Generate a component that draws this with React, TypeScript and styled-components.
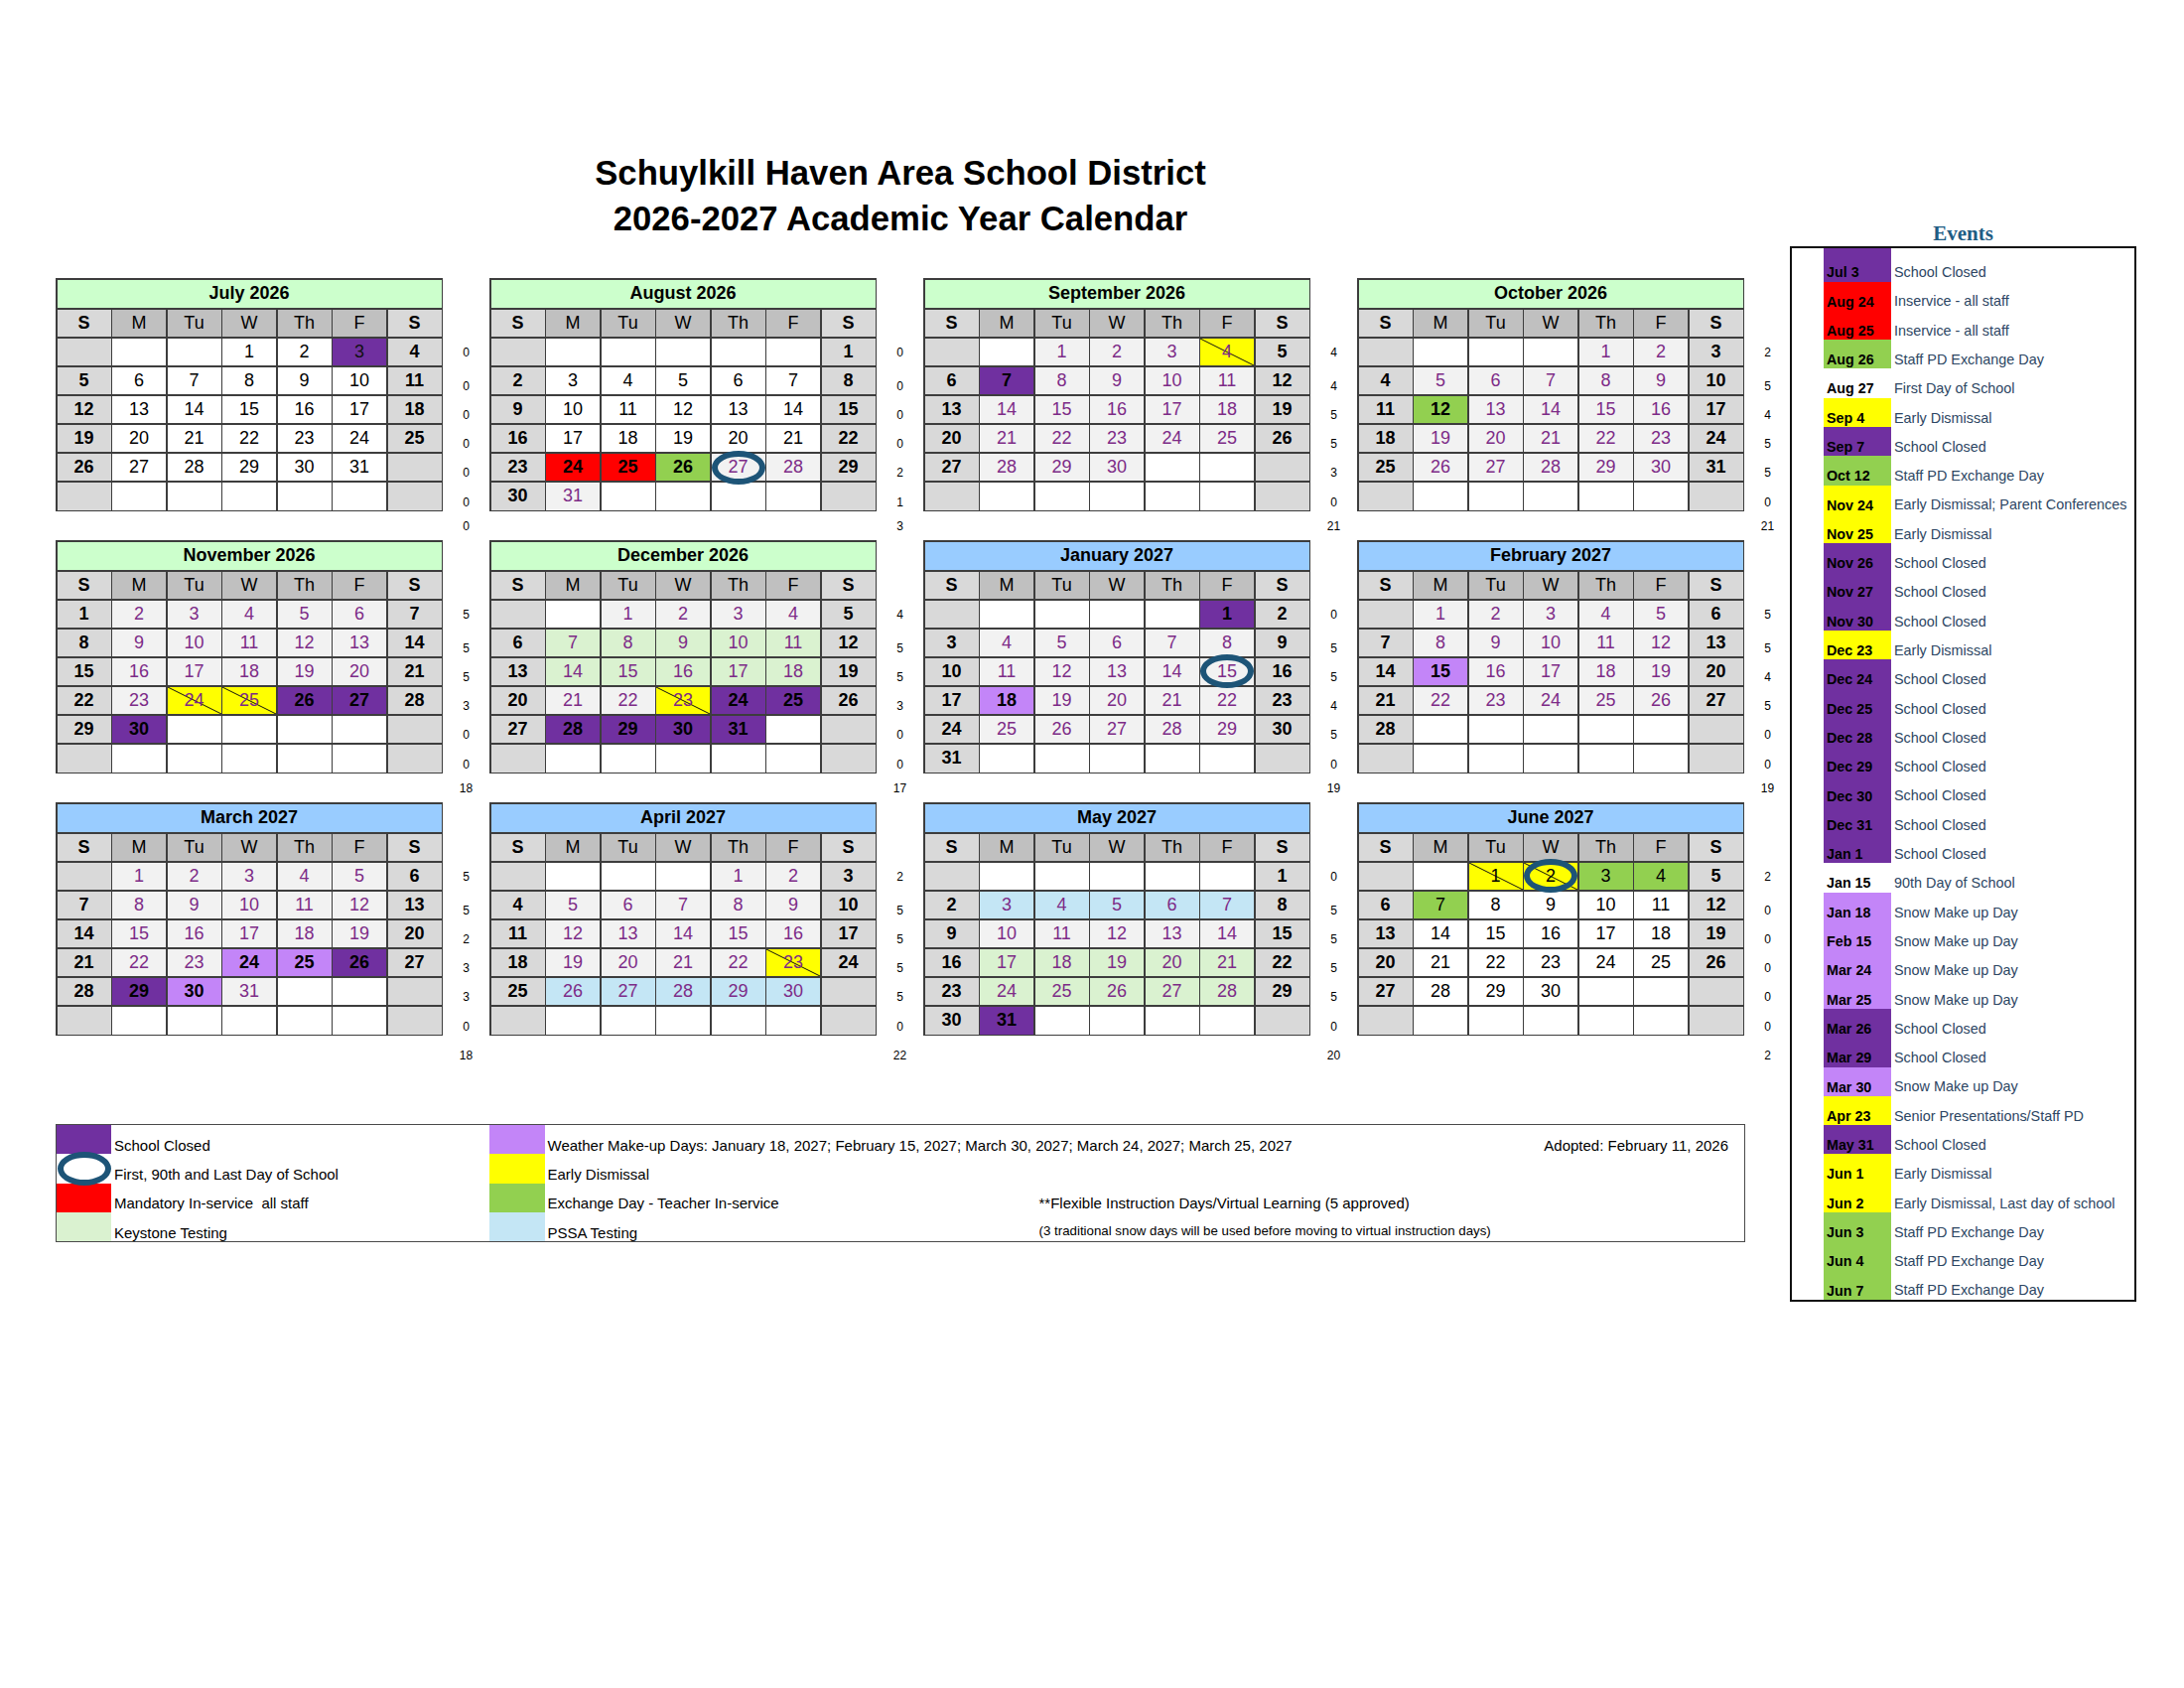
import React from 'react';
import styled, { createGlobalStyle, css } from 'styled-components';

const GlobalStyle = createGlobalStyle`
  html, body { margin: 0; padding: 0; background: #ffffff; }
  body { font-family: "Liberation Sans", Arial, Helvetica, sans-serif; color: #000; }
  * { box-sizing: border-box; }
`;

type CellKind =
  | 'off' | 'school' | 'closed' | 'closedLight' | 'red' | 'green' | 'greenB'
  | 'early' | 'earlyOff' | 'makeup' | 'keystone' | 'pssa';

const PURPLE_TEXT = '#7d2b87';

const KIND: Record<CellKind, { bg: string; color: string; bold?: boolean; diag?: boolean }> = {
  off: { bg: '#ffffff', color: '#000' },
  school: { bg: '#f2f2f2', color: PURPLE_TEXT },
  closed: { bg: '#7030a0', color: '#000', bold: true },
  closedLight: { bg: '#7030a0', color: '#111' },
  red: { bg: '#ff0000', color: '#000', bold: true },
  green: { bg: '#92d050', color: '#000' },
  greenB: { bg: '#92d050', color: '#000', bold: true },
  early: { bg: '#ffff00', color: PURPLE_TEXT, diag: true },
  earlyOff: { bg: '#ffff00', color: '#000', diag: true },
  makeup: { bg: '#c385f8', color: '#000', bold: true },
  keystone: { bg: '#daf2d0', color: PURPLE_TEXT },
  pssa: { bg: '#c4e6f5', color: PURPLE_TEXT },
};

interface MonthDef {
  name: string;
  blue?: boolean;
  start: number;
  days: number;
  def: CellKind;
  over: Record<number, CellKind>;
  ovals?: number[];
  counts: number[];
  total: number;
}

const range = (a: number, b: number, k: CellKind) => {
  const o: Record<number, CellKind> = {};
  for (let i = a; i <= b; i++) o[i] = k;
  return o;
};

const MONTHS: MonthDef[][] = [
  [
    { name: 'July 2026', start: 3, days: 31, def: 'off', over: { 3: 'closedLight' }, counts: [0, 0, 0, 0, 0, 0], total: 0 },
    { name: 'August 2026', start: 6, days: 31, def: 'off', over: { 24: 'red', 25: 'red', 26: 'greenB', 27: 'school', 28: 'school', 31: 'school' }, ovals: [27], counts: [0, 0, 0, 0, 2, 1], total: 3 },
    { name: 'September 2026', start: 2, days: 30, def: 'school', over: { 4: 'early', 7: 'closed' }, counts: [4, 4, 5, 5, 3, 0], total: 21 },
    { name: 'October 2026', start: 4, days: 31, def: 'school', over: { 12: 'greenB' }, counts: [2, 5, 4, 5, 5, 0], total: 21 },
  ],
  [
    { name: 'November 2026', start: 0, days: 30, def: 'school', over: { 24: 'early', 25: 'early', 26: 'closed', 27: 'closed', 30: 'closed' }, counts: [5, 5, 5, 3, 0, 0], total: 18 },
    { name: 'December 2026', start: 2, days: 31, def: 'school', over: { ...range(7, 11, 'keystone'), ...range(14, 18, 'keystone'), 23: 'early', 24: 'closed', 25: 'closed', 28: 'closed', 29: 'closed', 30: 'closed', 31: 'closed' }, counts: [4, 5, 5, 3, 0, 0], total: 17 },
    { name: 'January 2027', blue: true, start: 5, days: 31, def: 'school', over: { 1: 'closed', 18: 'makeup' }, ovals: [15], counts: [0, 5, 5, 4, 5, 0], total: 19 },
    { name: 'February 2027', blue: true, start: 1, days: 28, def: 'school', over: { 15: 'makeup' }, counts: [5, 5, 4, 5, 0, 0], total: 19 },
  ],
  [
    { name: 'March 2027', blue: true, start: 1, days: 31, def: 'school', over: { 24: 'makeup', 25: 'makeup', 26: 'closed', 29: 'closed', 30: 'makeup' }, counts: [5, 5, 2, 3, 3, 0], total: 18 },
    { name: 'April 2027', blue: true, start: 4, days: 30, def: 'school', over: { 23: 'early', ...range(26, 30, 'pssa') }, counts: [2, 5, 5, 5, 5, 0], total: 22 },
    { name: 'May 2027', blue: true, start: 6, days: 31, def: 'school', over: { ...range(3, 7, 'pssa'), ...range(17, 21, 'keystone'), ...range(24, 28, 'keystone'), 31: 'closed' }, counts: [0, 5, 5, 5, 5, 0], total: 20 },
    { name: 'June 2027', blue: true, start: 2, days: 30, def: 'off', over: { 1: 'earlyOff', 2: 'earlyOff', 3: 'green', 4: 'green', 7: 'green' }, ovals: [2], counts: [2, 0, 0, 0, 0, 0], total: 2 },
  ],
];

type EvKind = 'purple' | 'red' | 'green' | 'yellow' | 'none' | 'lilac';
const EV_BG: Record<EvKind, string> = {
  purple: '#7030a0',
  red: '#ff0000',
  green: '#92d050',
  yellow: '#ffff00',
  none: 'transparent',
  lilac: '#c385f8',
};

const EVENTS: [string, EvKind, string][] = [
  ['Jul 3', 'purple', 'School Closed'],
  ['Aug 24', 'red', 'Inservice - all staff'],
  ['Aug 25', 'red', 'Inservice - all staff'],
  ['Aug 26', 'green', 'Staff PD Exchange Day'],
  ['Aug 27', 'none', 'First Day of School'],
  ['Sep 4', 'yellow', 'Early Dismissal'],
  ['Sep 7', 'purple', 'School Closed'],
  ['Oct 12', 'green', 'Staff PD Exchange Day'],
  ['Nov 24', 'yellow', 'Early Dismissal; Parent Conferences'],
  ['Nov 25', 'yellow', 'Early Dismissal'],
  ['Nov 26', 'purple', 'School Closed'],
  ['Nov 27', 'purple', 'School Closed'],
  ['Nov 30', 'purple', 'School Closed'],
  ['Dec 23', 'yellow', 'Early Dismissal'],
  ['Dec 24', 'purple', 'School Closed'],
  ['Dec 25', 'purple', 'School Closed'],
  ['Dec 28', 'purple', 'School Closed'],
  ['Dec 29', 'purple', 'School Closed'],
  ['Dec 30', 'purple', 'School Closed'],
  ['Dec 31', 'purple', 'School Closed'],
  ['Jan 1', 'purple', 'School Closed'],
  ['Jan 15', 'none', '90th Day of School'],
  ['Jan 18', 'lilac', 'Snow Make up Day'],
  ['Feb 15', 'lilac', 'Snow Make up Day'],
  ['Mar 24', 'lilac', 'Snow Make up Day'],
  ['Mar 25', 'lilac', 'Snow Make up Day'],
  ['Mar 26', 'purple', 'School Closed'],
  ['Mar 29', 'purple', 'School Closed'],
  ['Mar 30', 'lilac', 'Snow Make up Day'],
  ['Apr 23', 'yellow', 'Senior Presentations/Staff PD'],
  ['May 31', 'purple', 'School Closed'],
  ['Jun 1', 'yellow', 'Early Dismissal'],
  ['Jun 2', 'yellow', 'Early Dismissal, Last day of school'],
  ['Jun 3', 'green', 'Staff PD Exchange Day'],
  ['Jun 4', 'green', 'Staff PD Exchange Day'],
  ['Jun 7', 'green', 'Staff PD Exchange Day'],
];

/* ---------- layout ---------- */

const Page = styled.div`
  width: 2200px;
  height: 1700px;
  padding: 151px 0 0 56px;
  display: flex;
  align-items: flex-start;
`;

const Main = styled.div`
  width: 1748px;
  display: flex;
  flex-direction: column;
`;

const Title = styled.h1`
  margin: 0;
  width: 1702px;
  text-align: center;
  font-family: "Liberation Sans", Arial, sans-serif;
  font-size: 34.7px;
  line-height: 46px;
  font-weight: 700;
  color: #000;
`;

const Grid = styled.div`
  margin-top: 37px;
  display: flex;
  flex-direction: column;
`;

const MonthRow = styled.div`
  display: flex;
  height: 264px;
`;

const MonthUnit = styled.div`
  display: flex;
  width: 437px;
  align-items: flex-start;
`;

const MonthTable = styled.div`
  width: 390px;
  display: grid;
  grid-template-columns: repeat(7, 1fr);
  grid-template-rows: 28.5px 27.5px repeat(6, 27.6px);
  gap: 1.5px;
  padding: 1.5px;
  background: #3d3d3d;
`;

const MonthHeader = styled.div<{ $blue?: boolean }>`
  grid-column: 1 / -1;
  background: ${(p) => (p.$blue ? '#99ccff' : '#ccffcc')};
  display: flex;
  align-items: center;
  justify-content: center;
  font-weight: 700;
  font-size: 18px;
`;

const DayName = styled.div<{ $weekend: boolean }>`
  background: ${(p) => (p.$weekend ? '#d9d9d9' : '#c0c0c0')};
  display: flex;
  align-items: center;
  justify-content: center;
  font-size: 18px;
  font-weight: ${(p) => (p.$weekend ? 700 : 400)};
`;

const DayCell = styled.div<{ $bg: string; $color: string; $bold?: boolean; $diag?: boolean }>`
  position: relative;
  background-color: ${(p) => p.$bg};
  color: ${(p) => p.$color};
  font-weight: ${(p) => (p.$bold ? 700 : 400)};
  font-size: 18px;
  display: flex;
  align-items: center;
  justify-content: center;
  ${(p) =>
    p.$diag &&
    css`
      background-image: linear-gradient(
        to top right,
        transparent calc(50% - 0.9px),
        #111 50%,
        transparent calc(50% + 0.9px)
      );
    `}
`;

const Oval = styled.span`
  position: absolute;
  left: 50%;
  top: 50%;
  width: 54px;
  height: 34px;
  transform: translate(-50%, -50%);
  border: 6.5px solid #1d5477;
  border-radius: 50%;
  z-index: 2;
  pointer-events: none;
`;

const CountCol = styled.div`
  width: 47px;
  display: flex;
  flex-direction: column;
  align-items: stretch;
  padding-top: 60.5px;
`;

const CountCell = styled.div<{ $shift: number }>`
  height: 29.1px;
  padding-top: ${(p) => p.$shift * 2}px;
  display: flex;
  align-items: center;
  justify-content: center;
  font-size: 12px;
`;

const TotalCell = styled.div<{ $extra: number }>`
  height: 30px;
  margin-top: ${(p) => p.$extra}px;
  display: flex;
  align-items: center;
  justify-content: center;
  font-size: 12px;
`;

/* ---------- legend ---------- */

const LegendBox = styled.div`
  margin-top: 60px;
  width: 1702px;
  border: 1.5px solid #4a4a4a;
  display: grid;
  grid-template-columns: 55px 380.5px 56px 498px 1fr;
  grid-template-rows: repeat(4, 29.3px);
`;

const Swatch = styled.div<{ $bg: string }>`
  position: relative;
  background: ${(p) => p.$bg};
`;

const LegendText = styled.div<{ $small?: boolean; $span?: number }>`
  grid-column: span ${(p) => p.$span || 1};
  display: flex;
  align-items: flex-end;
  justify-content: space-between;
  padding: 0 16px ${(p) => (p.$small ? 3.5 : 1.5)}px 3px;
  font-size: ${(p) => (p.$small ? 13.3 : 15)}px;
  line-height: 1;
  white-space: pre;
  color: #000;
`;

const LegendNote = styled(LegendText)`
  padding-left: 0;
`;

/* ---------- events ---------- */

const EventsCol = styled.aside`
  margin-left: -1px;
  padding-top: 70.5px;
  display: flex;
  flex-direction: column;
  width: 349px;
`;

const EventsTitle = styled.h2`
  margin: 0;
  height: 26px;
  line-height: 26px;
  text-align: center;
  font-family: "Liberation Serif", "Times New Roman", serif;
  font-weight: 700;
  font-size: 21px;
  color: #1f5c84;
`;

const EventsBox = styled.div`
  border: 2px solid #111;
  display: flex;
  flex-direction: column;
`;

const EventRow = styled.div`
  display: flex;
  height: 29.3px;
  &:first-child {
    height: 34px;
  }
`;

const EventDate = styled.div<{ $bg: string }>`
  width: 68px;
  margin-left: 32px;
  background: ${(p) => p.$bg};
  display: flex;
  align-items: flex-end;
  padding: 0 0 2px 3px;
  font-weight: 700;
  font-size: 14.3px;
  line-height: 1;
  color: #000;
`;

const EventDesc = styled.div`
  display: flex;
  align-items: flex-end;
  padding: 0 0 2px 3px;
  font-size: 14.4px;
  line-height: 1;
  color: #2d4663;
  white-space: nowrap;
`;

const DAY_NAMES = ['S', 'M', 'Tu', 'W', 'Th', 'F', 'S'];

const Month: React.FC<{ m: MonthDef; totalExtra: number }> = ({ m, totalExtra }) => {
  const cells: React.ReactNode[] = [];
  for (let i = 0; i < 42; i++) {
    const day = i - m.start + 1;
    const dow = i % 7;
    const weekend = dow === 0 || dow === 6;
    const valid = day >= 1 && day <= m.days;
    if (weekend) {
      cells.push(
        <DayCell key={i} $bg="#d9d9d9" $color="#000" $bold>
          {valid ? day : ''}
        </DayCell>
      );
    } else if (!valid) {
      cells.push(<DayCell key={i} $bg="#ffffff" $color="#000" />);
    } else {
      const k = KIND[m.over[day] || m.def];
      cells.push(
        <DayCell key={i} $bg={k.bg} $color={k.color} $bold={k.bold} $diag={k.diag}>
          {day}
          {m.ovals?.includes(day) && <Oval />}
        </DayCell>
      );
    }
  }
  return (
    <MonthUnit>
      <MonthTable>
        <MonthHeader $blue={m.blue}>{m.name}</MonthHeader>
        {DAY_NAMES.map((d, i) => (
          <DayName key={i} $weekend={i === 0 || i === 6}>
            {d}
          </DayName>
        ))}
        {cells}
      </MonthTable>
      <CountCol>
        {m.counts.map((c, i) => (
          <CountCell key={i} $shift={i === 0 ? 0 : 5}>
            {c}
          </CountCell>
        ))}
        <TotalCell $extra={totalExtra}>{m.total}</TotalCell>
      </CountCol>
    </MonthUnit>
  );
};

export default function App() {
  return (
    <>
      <GlobalStyle />
      <Page>
        <Main>
          <Title>
            Schuylkill Haven Area School District
            <br />
            2026-2027 Academic Year Calendar
          </Title>
          <Grid>
            {MONTHS.map((row, ri) => (
              <MonthRow key={ri}>
                {row.map((m) => (
                  <Month key={m.name} m={m} totalExtra={ri === 2 ? 5 : 0} />
                ))}
              </MonthRow>
            ))}
          </Grid>
          <LegendBox>
            <Swatch $bg="#7030a0" />
            <LegendText>School Closed</LegendText>
            <Swatch $bg="#c385f8" />
            <LegendText $span={2}>
              <span>
                Weather Make-up Days: January 18, 2027; February 15, 2027; March 30, 2027; March 24, 2027; March 25, 2027
              </span>
              <span>Adopted: February 11, 2026</span>
            </LegendText>

            <Swatch $bg="#ffffff">
              <Oval />
            </Swatch>
            <LegendText>First, 90th and Last Day of School</LegendText>
            <Swatch $bg="#ffff00" />
            <LegendText>Early Dismissal</LegendText>
            <LegendNote />

            <Swatch $bg="#ff0000" />
            <LegendText>{'Mandatory In-service  all staff'}</LegendText>
            <Swatch $bg="#92d050" />
            <LegendText>Exchange Day - Teacher In-service</LegendText>
            <LegendNote>**Flexible Instruction Days/Virtual Learning (5 approved)</LegendNote>

            <Swatch $bg="#daf2d0" />
            <LegendText>Keystone Testing</LegendText>
            <Swatch $bg="#c4e6f5" />
            <LegendText>PSSA Testing</LegendText>
            <LegendNote $small>
              (3 traditional snow days will be used before moving to virtual instruction days)
            </LegendNote>
          </LegendBox>
        </Main>
        <EventsCol>
          <EventsTitle>Events</EventsTitle>
          <EventsBox>
            {EVENTS.map(([d, k, t]) => (
              <EventRow key={d}>
                <EventDate $bg={EV_BG[k]}>{d}</EventDate>
                <EventDesc>{t}</EventDesc>
              </EventRow>
            ))}
          </EventsBox>
        </EventsCol>
      </Page>
    </>
  );
}
